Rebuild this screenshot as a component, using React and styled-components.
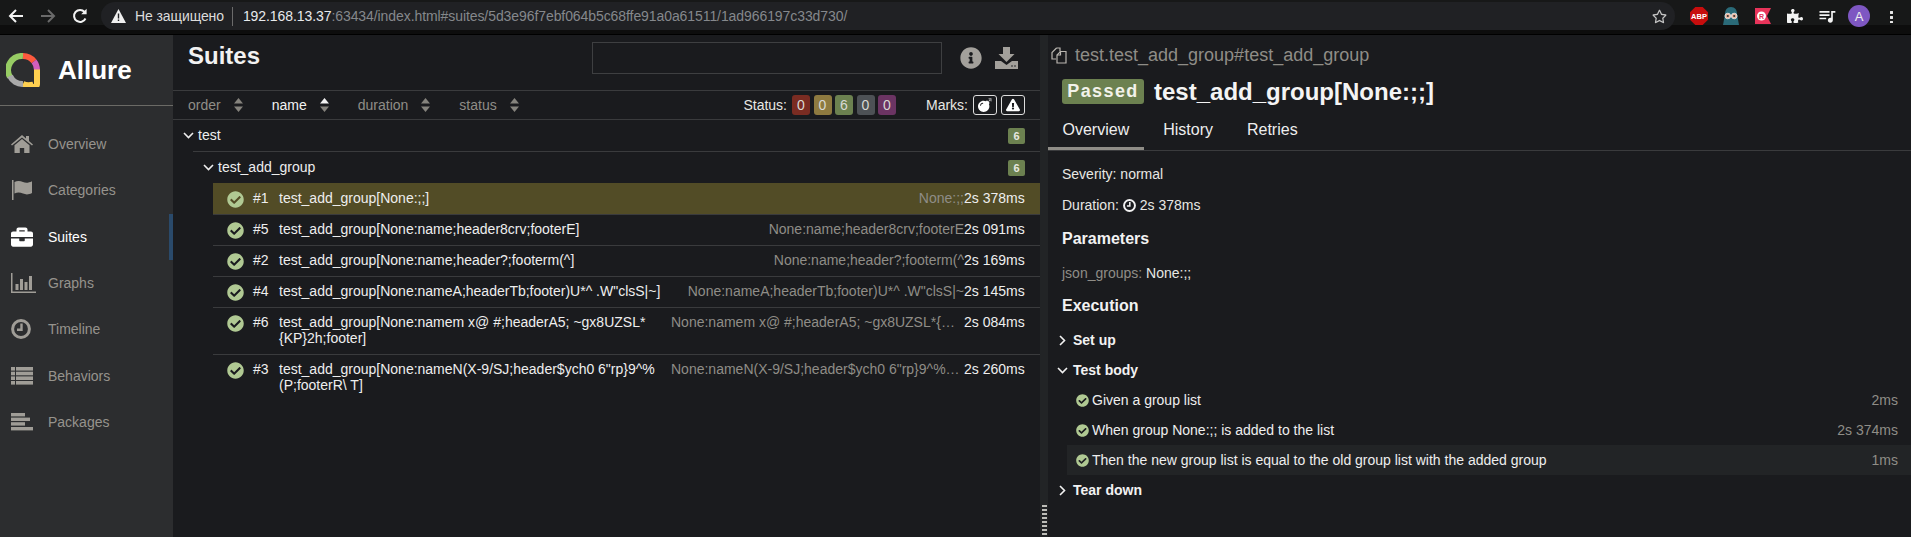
import React from 'react';
import styled, { createGlobalStyle } from 'styled-components';
import { FaCheckCircle, FaInfoCircle, FaBomb, FaExclamationTriangle, FaBriefcase, FaPuzzlePiece, FaRegStar } from 'react-icons/fa';
import { MdQueueMusic } from 'react-icons/md';

const GlobalStyle = createGlobalStyle`
  html, body { margin: 0; padding: 0; background: #1a1b1e; height: 100%; overflow: hidden; }
  * { box-sizing: border-box; }
  body { font-family: "Liberation Sans", Arial, sans-serif; font-size: 14px; color: #e8e8e4; }
`;

const Page = styled.div`
  width: 1911px; height: 537px; display: flex; flex-direction: column; overflow: hidden;
`;

/* browser chrome */
const Toolbar = styled.header`
  height: 35px; flex: none; display: flex; align-items: center; padding: 0 4px 3px 0;
  background: linear-gradient(#171818 0, #171818 25px, #0d0d0d 25px, #0d0d0d 34px, #000 34px);
`;
const NavButton = styled.span`
  width: 32px; height: 28px; flex: none; display: flex; align-items: center; justify-content: center;
  color: ${p => (p.$muted ? '#6a6a6a' : '#f2f2f2')};
`;
const NavButtons = styled.div`display: flex; width: 101px;`;
const Omnibox = styled.div`
  width: 1574px; height: 28px; flex: none; background: #202124; border-radius: 14px;
  display: flex; align-items: center; padding: 0 7px 0 10px; font-size: 14px; white-space: nowrap;
`;
const Security = styled.span`color: #dcdcdc; margin-left: 9px; letter-spacing: -0.1px;`;
const OmniDivider = styled.span`width: 1px; height: 19px; background: #6b6b6b; margin: 0 10px 0 8px;`;
const UrlHost = styled.span`color: #e8eaed; letter-spacing: -0.08px;`;
const UrlRest = styled.span`color: #85888c; letter-spacing: -0.08px;`;
const StarSlot = styled.span`margin-left: auto; color: #c4c4c4; display: flex; margin-right: 1px;`;
const Extensions = styled.div`display: flex; margin-left: 8px;`;
const ExtSlot = styled.span`
  width: 32px; height: 28px; display: flex; align-items: center; justify-content: center; color: #f4f4f4;
`;
const Avatar = styled.span`
  width: 22px; height: 22px; border-radius: 50%; background: #7e57c2; color: #eee;
  display: flex; align-items: center; justify-content: center; font-size: 13px;
`;
const Dots = styled.span`
  width: 3px; height: 13px; background: radial-gradient(circle at center, #e6e6e6 1.4px, transparent 1.6px) 0 0 / 3px 5px;
`;

/* application */
const Body = styled.div`flex: 1; display: flex; min-height: 0;`;
const Sidebar = styled.nav`width: 173px; flex: none; background: #2c2d2f;`;
const Brand = styled.div`
  height: 71px; border-bottom: 1px solid #6b6a66; display: flex; align-items: center; padding: 0 0 0 6px; gap: 18px;
`;
const BrandName = styled.span`font-size: 26px; font-weight: 700; color: #fff;`;
const NavList = styled.div`padding-top: 15px;`;
const NavItem = styled.div`
  height: 46.33px; display: flex; align-items: center; padding-left: 11px; font-size: 14px;
  color: ${p => (p.$active ? '#fff' : '#96938d')};
  border-right: 4px solid ${p => (p.$active ? '#2a4a6b' : 'transparent')};
`;
const NavIcon = styled.span`width: 37px; flex: none; display: flex; align-items: center; color: ${p => (p.$active ? '#fff' : '#a09d97')};`;

const ListPane = styled.main`width: 867px; flex: none; background: #1a1b1e; display: flex; flex-direction: column;`;
const ListHeader = styled.div`
  height: 56px; flex: none; border-bottom: 1px solid #3a3b3d; display: flex; align-items: flex-start; padding: 7px 22px 0 15px;
`;
const PageTitle = styled.h1`margin: 0; font-size: 24px; line-height: 28px; font-weight: 700; color: #f2f2f2;`;
const SearchBox = styled.div`
  margin-left: auto; width: 350px; height: 32px; border: 1px solid #3e3f41; margin-right: 18px;
`;
const HeaderIcon = styled.span`
  width: 23px; height: 32px; display: flex; align-items: center; justify-content: center; color: #a3a09b;
  & + & { margin-left: 12.5px; }
`;
const SortBar = styled.div`
  height: 29px; flex: none; border-bottom: 1px solid #3a3b3d; display: flex; align-items: center; padding: 0 15px;
`;
const SortItem = styled.span`
  display: flex; align-items: center; gap: 13px; margin-right: 29px; color: ${p => (p.$active ? '#f2f2f2' : '#8f8d87')};
`;
const StatusGroup = styled.div`margin-left: auto; display: flex; align-items: center; color: #e8e8e4;`;
const StatusLabel = styled.span`margin-right: 5px;`;
const StatusBadge = styled.span`
  width: 18px; height: 20px; border-radius: 3px; background: ${p => p.$color}; color: #d9d9d4; margin-right: 3.5px;
  display: flex; align-items: center; justify-content: center;
`;
const MarksLabel = styled.span`margin: 0 5px 0 26.5px;`;
const MarkButton = styled.span`
  width: 24px; height: 20px; border: 1px solid #ddd; border-radius: 3px; color: #fff;
  display: flex; align-items: center; justify-content: center;
  & + & { margin-left: 4px; }
`;

const TreeRow = styled.div`
  height: ${p => (p.$nested ? 32 : 31)}px; flex: none; display: flex; align-items: center;
  margin-left: ${p => (p.$nested ? 20 : 0)}px; padding: 0 15px 0 10px; color: #eee;
  border-top: ${p => (p.$nested ? '1px solid #3a3b3d' : 'none')};
`;
const TreeName = styled.span`margin: 0 0 2px 4px;`;
const CountBadge = styled.span`
  margin-left: auto; width: 17px; height: 16px; border-radius: 2px; background: #6c8150; color: #e8e8e0;
  font-size: 11px; font-weight: 700; display: flex; align-items: center; justify-content: center;
`;
const CaseList = styled.div`margin-left: 40px;`;
const CaseRow = styled.div`
  display: flex; align-items: flex-start; padding: 6px 16px 8px 14px; border-top: 1px solid #3a3b3d;
  line-height: 16px; background: ${p => (p.$selected ? '#524c26' : 'transparent')}; color: #eee;
  border-top-color: ${p => (p.$selected ? '#524c26' : '#3a3b3d')};
`;
const CheckSlot = styled.span`width: 26px; flex: none; display: flex; color: #b0c993; align-items: center; height: 16px; padding-top: 2px;`;
const CaseNum = styled.span`width: 26px; flex: none;`;
const CaseName = styled.span`width: 384px; flex: none; margin-right: 8px; overflow-wrap: anywhere;`;
const CaseParams = styled.span`
  width: 293px; flex: none; text-align: right; white-space: nowrap; overflow: hidden; text-overflow: ellipsis;
  color: #8f8d87;
`;
const CaseTime = styled.span`width: 60px; flex: none; white-space: nowrap; text-align: right;`;

const Splitter = styled.div`
  width: 8px; flex: none; background: #222426; display: flex; align-items: flex-end; justify-content: center;
`;
const Grip = styled.span`
  width: 5px; height: 32px;
  background-image: linear-gradient(#bdbdb8 50%, transparent 50%);
  background-size: 3px 4px;
`;

const DetailPane = styled.section`flex: 1; min-width: 0; background: #1a1b1e;`;
const PathRow = styled.div`
  height: 40px; display: flex; align-items: center; padding-left: 3px; font-size: 18px; color: #8f8d87; gap: 8px;
`;
const TitleRow = styled.div`display: flex; align-items: center; margin-top: 4px; padding-left: 14px; height: 25px; gap: 10px;`;
const PassedBadge = styled.span`
  width: 82px; height: 25px; background: #6c8150; border-radius: 3px; color: #f2f2ea;
  font-size: 18px; font-weight: 700; letter-spacing: 1.4px;
  display: flex; align-items: center; justify-content: center;
`;
const DetailTitle = styled.h2`margin: 0; font-size: 24px; line-height: 28px; font-weight: 700; color: #f4f4f4;`;
const Tabs = styled.div`
  margin-top: 11px; height: 36px; border-bottom: 1px solid #3a3b3d; display: flex; gap: 5px;
`;
const Tab = styled.span`
  height: 35px; padding: 0 14.5px 3px; display: flex; align-items: center; font-size: 16px; color: #eee;
  border-bottom: 3px solid ${p => (p.$active ? '#8f8d87' : 'transparent')};
`;
const DetailBody = styled.div`padding-top: 13px;`;
const InfoLine = styled.div`
  height: 20px; line-height: 20px; padding-left: 14px; margin-bottom: ${p => p.$after || 0}px; display: flex; align-items: center; white-space: pre;
`;
const Muted = styled.span`color: #8f8d87;`;
const ClockSlot = styled.span`display: flex; margin: 0 4px; color: #f2f2f2;`;
const SectionTitle = styled.h3`
  margin: ${p => p.$before || 0}px 0 ${p => p.$after}px; padding-left: 14px; height: 20px; line-height: 20px; font-size: 16px; font-weight: 700; color: #f2f2f2;
`;
const StepHead = styled.div`
  height: 30px; display: flex; align-items: center; padding-left: 9px; font-weight: 700; color: #f2f2f2;
`;
const ChevronSlot = styled.span`width: 16px; flex: none; display: flex; justify-content: flex-start; color: #f2f2f2;`;
const SubStep = styled.div`
  height: 30px; margin-left: 19px; display: flex; align-items: center; padding: 0 13px 0 9px;
  background: ${p => (p.$hover ? '#222426' : 'transparent')}; color: #eee;
`;
const StepCheck = styled.span`display: flex; color: #b0c993; width: 16px; flex: none;`;
const StepTime = styled.span`margin-left: auto; color: #8f8d87;`;

/* drawings */
const Arrow = ({ dir = 'left' }) => (
  <svg width="16" height="16" viewBox="0 0 16 16" fill="none" stroke="currentColor" strokeWidth="2">
    {dir === 'left'
      ? <path d="M15 8H2M8 2L2 8l6 6" />
      : <path d="M1 8h13M8 2l6 6-6 6" />}
  </svg>
);
const Reload = () => (
  <svg width="16" height="16" viewBox="0 0 16 16" fill="none" stroke="currentColor" strokeWidth="2">
    <path d="M13.5 10.5A6 6 0 1 1 12.6 4" />
    <path d="M14.6 0.8v5.4H9.2z" fill="currentColor" stroke="none" />
  </svg>
);
const WarnTriangle = () => (
  <svg width="15" height="14" viewBox="0 0 15 14">
    <path d="M7.5 0L15 14H0z" fill="#f0f0f0" />
    <path d="M6.8 4.5h1.4v5H6.8zM6.8 10.6h1.4V12H6.8z" fill="#202124" />
  </svg>
);
const AllureLogo = () => (
  <svg width="34" height="34" viewBox="0 0 34 34" fill="none" strokeWidth="6">
    <path d="M4 24A14 14 0 0 1 17 3" stroke="#97cc64" />
    <path d="M17 3a14 14 0 0 1 11 5.4" stroke="#fd5a3e" />
    <path d="M28 8.4A14 14 0 0 1 31 17" stroke="#d35ebe" />
    <path d="M31 16.5V31c0 1.4-1 3-3 3s-3-1-3.4-2A14 14 0 0 1 17 31" stroke="#ffd050" />
    <path d="M17 31A14 14 0 0 1 4 23" stroke="#a9a9a9" />
  </svg>
);
const HomeIcon = () => (
  <svg width="22" height="18" viewBox="0 0 22 18" fill="currentColor">
    <path d="M11 0l4 3.4V1h3v5l4 3.4-1 1.2L11 2.4 1 10.6 0 9.4z" />
    <path d="M11 4l7.5 6.2V18h-5.3v-5H8.8v5H3.5v-7.8z" />
  </svg>
);
const FlagIcon = () => (
  <svg width="22" height="20" viewBox="0 0 22 20" fill="currentColor">
    <rect x="1" y="0" width="1.5" height="20" />
    <path d="M3.5 2c3-1.6 6-1 8.5 0s5.500 1 9-.8V13c-3.500 1.800-6 1.800-9 .6s-5.500-1.400-8.500 0z" />
  </svg>
);
const ChartIcon = () => (
  <svg width="26" height="20" viewBox="0 0 26 20" fill="currentColor">
    <rect x="0" y="0" width="1.5" height="20" />
    <rect x="0" y="18.5" width="25" height="1.5" />
    <rect x="4.5" y="11" width="3" height="6" />
    <rect x="9" y="6" width="3" height="11" />
    <rect x="13.5" y="9" width="3" height="8" />
    <rect x="18" y="3" width="3" height="14" />
  </svg>
);
const ListIcon = () => (
  <svg width="22" height="18" viewBox="0 0 22 18" fill="currentColor">
    {[0, 4.7, 9.4, 14].map(y => (
      <g key={y}>
        <rect x="0" y={y} width="4" height="3.6" />
        <rect x="5" y={y} width="17" height="3.6" />
      </g>
    ))}
  </svg>
);
const PackagesIcon = () => (
  <svg width="22" height="18" viewBox="0 0 22 18" fill="currentColor">
    <rect x="0" y="0" width="14" height="3.4" />
    <rect x="0" y="4.6" width="19" height="3.4" />
    <rect x="0" y="9.2" width="14" height="3.4" />
    <rect x="0" y="14" width="22" height="3.4" />
  </svg>
);
const ClockIcon = ({ size }) => (
  <svg width={size} height={size} viewBox="0 0 20 20" fill="none" stroke="currentColor">
    <circle cx="10" cy="10" r="8.4" strokeWidth="3" />
    <path d="M10.5 4.5v6.3H6" strokeWidth="2.4" />
  </svg>
);
const SortIcon = ({ active }) => (
  <svg width="9" height="14" viewBox="0 0 9 14">
    <path d="M4.5 0L9 5.5H0z" fill={active ? '#f2f2f2' : '#85837d'} />
    <path d="M4.5 14L9 8.5H0z" fill="#85837d" />
  </svg>
);
const Chevron = ({ open }) => (
  <svg width="11" height="11" viewBox="0 0 11 11" fill="none" stroke="currentColor" strokeWidth="1.6">
    {open ? <path d="M1 3l4.5 4.5L10 3" /> : <path d="M3 1l4.5 4.5L3 10" />}
  </svg>
);
const DownloadIcon = () => (
  <svg width="23" height="22" viewBox="0 0 23 22" fill="currentColor">
    <path d="M8 0h7v7h4.5l-8 8-8-8H8z" />
    <path d="M0 14h6l5.5 4 5.500-4h6v8H0z" />
    <circle cx="17" cy="19" r=".8" fill="#1a1b1e" />
    <circle cx="20" cy="19" r=".8" fill="#1a1b1e" />
  </svg>
);
const CopyIcon = () => (
  <svg width="16" height="17" viewBox="0 0 16 17" fill="none" stroke="#b9b6b0" strokeWidth="1.2">
    <path d="M5.5 1H9v3.5M5.5 1L1 5.5V12h4" />
    <path d="M9.5 4.5H15V16H6V8z" />
    <path d="M9.5 4.5V8H6" />
  </svg>
);
const AbpIcon = () => (
  <svg width="18" height="18" viewBox="0 0 18 18">
    <path d="M5.3 0h7.4L18 5.3v7.4L12.7 18H5.3L0 12.7V5.3z" fill="#c70d0d" />
    <text x="9" y="12" textAnchor="middle" fontSize="7.5" fontWeight="700" fontFamily="Liberation Sans" fill="#fff">ABP</text>
  </svg>
);
const OwlIcon = () => (
  <svg width="18" height="18" viewBox="0 0 18 18">
    <path d="M9 0c4 0 6 3 6 7l2 11H1L3 7c0-4 2-7 6-7z" fill="#2a6a78" />
    <circle cx="5.8" cy="9" r="2.8" fill="#f0b8a0" stroke="#d9d9d9" />
    <circle cx="12.2" cy="9" r="2.8" fill="#f0b8a0" stroke="#d9d9d9" />
    <circle cx="5.8" cy="9" r="1.1" fill="#333" />
    <circle cx="12.2" cy="9" r="1.1" fill="#333" />
  </svg>
);
const RIcon = () => (
  <svg width="16" height="16" viewBox="0 0 16 16">
    <path d="M0 0h16l-4 8 4 8H0z" fill="#e8345a" />
    <circle cx="6.5" cy="8" r="4.5" fill="#fff" />
    <text x="6.5" y="10.500" textAnchor="middle" fontSize="7" fontWeight="700" fontFamily="Liberation Sans" fill="#e8345a">R</text>
  </svg>
);

const NAV = [
  ['Overview', <HomeIcon />],
  ['Categories', <FlagIcon />],
  ['Suites', <FaBriefcase size={22} />, true],
  ['Graphs', <ChartIcon />],
  ['Timeline', <ClockIcon size={20} />],
  ['Behaviors', <ListIcon />],
  ['Packages', <PackagesIcon />],
];
const SORTS = [['order'], ['name', true], ['duration'], ['status']];
const STATUSES = [['0', '#7a2c22'], ['0', '#8e7a40'], ['6', '#6c8150'], ['0', '#4d5155'], ['0', '#6b3463']];
const LONG_3A = 'test_add_group[None:nameN(X-9/SJ;header$ych0 6"rp}9^%';
const CASES = [
  { n: 1, name: 'test_add_group[None:;;]', params: 'None:;;', time: '2s 378ms', selected: true },
  { n: 5, name: 'test_add_group[None:name;header8crv;footerE]', params: 'None:name;header8crv;footerE', time: '2s 091ms' },
  { n: 2, name: 'test_add_group[None:name;header?;footerm(^]', params: 'None:name;header?;footerm(^', time: '2s 169ms' },
  { n: 4, name: 'test_add_group[None:nameA;headerTb;footer)U*^ .W"clsS|~]', params: 'None:nameA;headerTb;footer)U*^ .W"clsS|~', time: '2s 145ms' },
  { n: 6, name: <>test_add_group[None:namem x@ #;headerA5; ~gx8UZSL*<br />{'{KP}2h;footer]'}</>, params: 'None:namem x@ #;headerA5; ~gx8UZSL*{KP}2h;footer', time: '2s 084ms' },
  { n: 3, name: <>{LONG_3A}<br />{'(P;footerR\\ T]'}</>, params: 'None:nameN(X-9/SJ;header$ych0 6"rp}9^%(P;footerR\\ T', time: '2s 260ms' },
];
const SUBSTEPS = [
  ['Given a group list', '2ms'],
  ['When group None:;; is added to the list', '2s 374ms'],
  ['Then the new group list is equal to the old group list with the added group', '1ms', true],
];

export default function App() {
  return (
    <Page>
      <GlobalStyle />
      <Toolbar>
        <NavButtons>
          <NavButton><Arrow /></NavButton>
          <NavButton $muted><Arrow dir="right" /></NavButton>
          <NavButton><Reload /></NavButton>
        </NavButtons>
        <Omnibox>
          <WarnTriangle />
          <Security>Не защищено</Security>
          <OmniDivider />
          <UrlHost>192.168.13.37</UrlHost>
          <UrlRest>:63434/index.html#suites/5d3e96f7ebf064b5c68ffe91a0a61511/1ad966197c33d730/</UrlRest>
          <StarSlot><FaRegStar size={15} /></StarSlot>
        </Omnibox>
        <Extensions>
          <ExtSlot><AbpIcon /></ExtSlot>
          <ExtSlot><OwlIcon /></ExtSlot>
          <ExtSlot><RIcon /></ExtSlot>
          <ExtSlot><FaPuzzlePiece size={16} /></ExtSlot>
          <ExtSlot><MdQueueMusic size={20} /></ExtSlot>
          <ExtSlot><Avatar>A</Avatar></ExtSlot>
          <ExtSlot><Dots /></ExtSlot>
        </Extensions>
      </Toolbar>
      <Body>
        <Sidebar>
          <Brand>
            <AllureLogo />
            <BrandName>Allure</BrandName>
          </Brand>
          <NavList>
            {NAV.map(([label, icon, active]) => (
              <NavItem key={label} $active={active}>
                <NavIcon $active={active}>{icon}</NavIcon>
                {label}
              </NavItem>
            ))}
          </NavList>
        </Sidebar>
        <ListPane>
          <ListHeader>
            <PageTitle>Suites</PageTitle>
            <SearchBox />
            <HeaderIcon><FaInfoCircle size={22} /></HeaderIcon>
            <HeaderIcon><DownloadIcon /></HeaderIcon>
          </ListHeader>
          <SortBar>
            {SORTS.map(([label, active]) => (
              <SortItem key={label} $active={active}>
                {label}
                <SortIcon active={active} />
              </SortItem>
            ))}
            <StatusGroup>
              <StatusLabel>Status:</StatusLabel>
              {STATUSES.map(([value, color], i) => (
                <StatusBadge key={i} $color={color}>{value}</StatusBadge>
              ))}
              <MarksLabel>Marks:</MarksLabel>
              <MarkButton><FaBomb size={14} /></MarkButton>
              <MarkButton><FaExclamationTriangle size={14} /></MarkButton>
            </StatusGroup>
          </SortBar>
          <TreeRow>
            <Chevron open />
            <TreeName>test</TreeName>
            <CountBadge>6</CountBadge>
          </TreeRow>
          <TreeRow $nested>
            <Chevron open />
            <TreeName>test_add_group</TreeName>
            <CountBadge>6</CountBadge>
          </TreeRow>
          <CaseList>
            {CASES.map(c => (
              <CaseRow key={c.n} $selected={c.selected}>
                <CheckSlot><FaCheckCircle size={17} /></CheckSlot>
                <CaseNum>#{c.n}</CaseNum>
                <CaseName>{c.name}</CaseName>
                <CaseParams>{c.params}</CaseParams>
                <CaseTime>{c.time}</CaseTime>
              </CaseRow>
            ))}
          </CaseList>
        </ListPane>
        <Splitter><Grip /></Splitter>
        <DetailPane>
          <PathRow>
            <CopyIcon />
            test.test_add_group#test_add_group
          </PathRow>
          <TitleRow>
            <PassedBadge>Passed</PassedBadge>
            <DetailTitle>test_add_group[None:;;]</DetailTitle>
          </TitleRow>
          <Tabs>
            <Tab $active>Overview</Tab>
            <Tab>History</Tab>
            <Tab>Retries</Tab>
          </Tabs>
          <DetailBody>
            <InfoLine $after={11}>Severity: normal</InfoLine>
            <InfoLine $after={14}>Duration:<ClockSlot><ClockIcon size={13} /></ClockSlot>2s 378ms</InfoLine>
            <SectionTitle $after={14}>Parameters</SectionTitle>
            <InfoLine $after={13}><Muted>json_groups: </Muted>None:;;</InfoLine>
            <SectionTitle $after={9}>Execution</SectionTitle>
            <StepHead><ChevronSlot><Chevron /></ChevronSlot>Set up</StepHead>
            <StepHead><ChevronSlot><Chevron open /></ChevronSlot>Test body</StepHead>
            {SUBSTEPS.map(([label, time, hover]) => (
              <SubStep key={label} $hover={hover}>
                <StepCheck><FaCheckCircle size={13} /></StepCheck>
                {label}
                <StepTime>{time}</StepTime>
              </SubStep>
            ))}
            <StepHead><ChevronSlot><Chevron /></ChevronSlot>Tear down</StepHead>
          </DetailBody>
        </DetailPane>
      </Body>
    </Page>
  );
}
